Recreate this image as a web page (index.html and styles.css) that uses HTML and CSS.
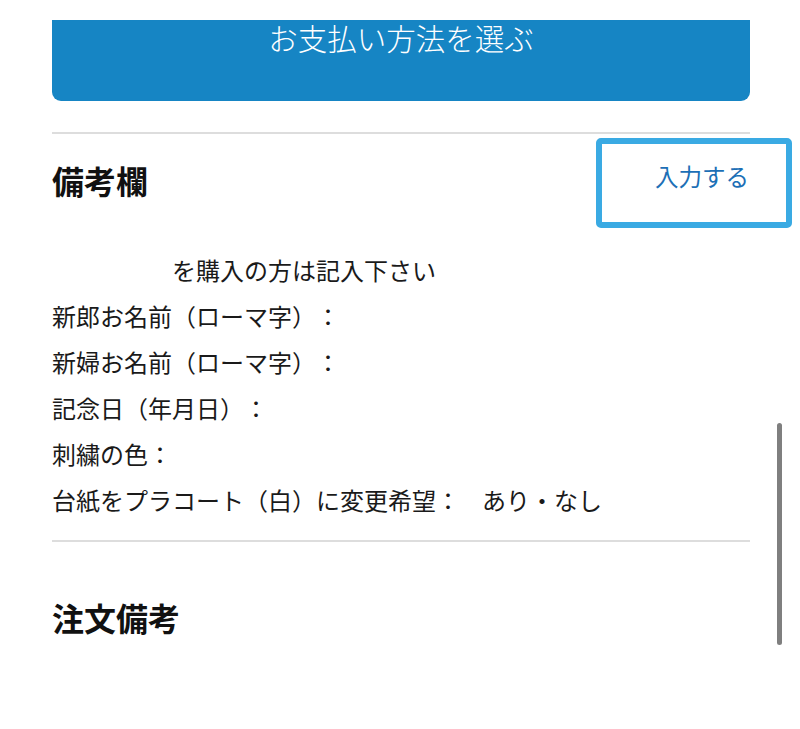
FILE: index.html
```html
<!DOCTYPE html>
<html lang="ja">
<head>
<meta charset="utf-8">
<link rel="stylesheet" href="styles.css">
</head>
<body>
<div class="page">
  <div class="pay-btn">お支払い方法を選ぶ</div>
  <hr class="divider first">
  <div class="section-head">
    <h2 class="title">備考欄</h2>
    <a class="edit-link">入力する</a>
  </div>
  <div class="notes">
    <p class="line indent">を購入の方は記入下さい</p>
    <p class="line">新郎お名前（ローマ字）：</p>
    <p class="line">新婦お名前（ローマ字）：</p>
    <p class="line">記念日（年月日）：</p>
    <p class="line">刺繍の色：</p>
    <p class="line">台紙をプラコート（白）に変更希望：<span class="opt">あり・なし</span></p>
  </div>
  <hr class="divider second">
  <h2 class="title order">注文備考</h2>
  <div class="highlight"></div>
  <div class="scrollbar"></div>
</div>
</body>
</html>
```

FILE: styles.css
```css
html, body {
  margin: 0;
  padding: 0;
  background: #fff;
}
body {
  font-family: "Noto Sans CJK JP", "Noto Sans", sans-serif;
  color: #111;
  text-spacing-trim: space-all;
}
.page {
  position: relative;
  width: 800px;
  height: 729px;
  overflow: hidden;
  padding: 0 50px 0 52px;
  box-sizing: border-box;
}
.pay-btn {
  margin-top: 20px;
  height: 81px;
  background: #1685c4;
  border-radius: 0 0 9px 9px;
  color: #fff;
  font-size: 29.5px;
  font-weight: 300;
  line-height: 34px;
  text-align: center;
}
.divider {
  margin: 0;
  border: 0;
  border-top: 2px solid #dddddd;
}
.divider.first {
  margin-top: 31px;
}
.section-head {
  height: 96px;
  display: flex;
  align-items: center;
  justify-content: space-between;
}
.title {
  margin: 0;
  font-size: 32px;
  font-weight: 700;
  line-height: 40px;
  color: #111;
}
.section-head .title {
  margin-bottom: 4px;
}
.edit-link {
  color: #1c6fb6;
  font-size: 23.5px;
  line-height: 30px;
  margin-right: 1px;
  margin-bottom: 12px;
}
.notes {
  margin-top: 17px;
}
.line {
  margin: 0;
  font-size: 24px;
  line-height: 46px;
  color: #1a1a1a;
}
.indent {
  padding-left: 120px;
}
.opt {
  padding-left: 22px;
}
.divider.second {
  margin-top: 17px;
}
.title.order {
  padding-top: 55px;
}
.highlight {
  position: absolute;
  left: 596px;
  top: 138px;
  width: 196px;
  height: 90px;
  box-sizing: border-box;
  border: 6px solid #3aaae3;
  border-radius: 5px;
}
.scrollbar {
  position: absolute;
  left: 777px;
  top: 423px;
  width: 5px;
  height: 222px;
  border-radius: 3px;
  background: #7f7f7f;
}
```
